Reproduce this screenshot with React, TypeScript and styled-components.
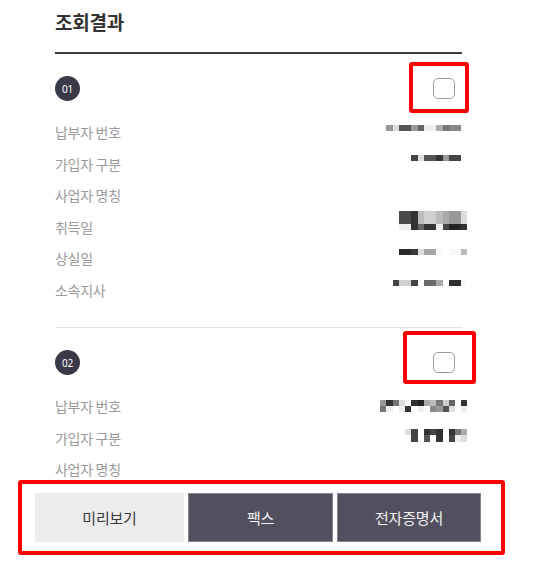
import React from "react";
import styled, { createGlobalStyle } from "styled-components";

const Global = createGlobalStyle`
  html, body { margin: 0; padding: 0; background: #fff; overflow: hidden; }
  body { font-family: "Noto Sans CJK KR", "Noto Sans", sans-serif; }
`;

const Page = styled.div`
  width: 407px;
  margin-left: 55px;
  padding-bottom: 90px;
`;

const Header = styled.div`
  height: 54px;
  padding-top: 8px;
  box-sizing: border-box;
  border-bottom: 2px solid #3a3a3a;
`;

const Title = styled.h2`
  margin: 0;
  font-size: 19px;
  line-height: 27px;
  font-weight: 700;
  color: #333;
  letter-spacing: -0.2px;
`;

const Item = styled.section`
  padding: 22px 0 21.5px;
  border-bottom: 1px solid #e4e4e4;
`;

const ItemHead = styled.div`
  display: flex;
  align-items: center;
  justify-content: space-between;
  padding-right: 7px;
  height: 25px;
  margin-bottom: 15.5px;
`;

const Badge = styled.span`
  width: 25px;
  height: 25px;
  border-radius: 50%;
  background: #3a3948;
  color: #fff;
  font-family: "Noto Sans", sans-serif;
  font-size: 10px;
  display: flex;
  align-items: center;
  justify-content: center;
  letter-spacing: -0.3px;
`;

const CheckWrap = styled.div`
  position: relative;
  width: 22px;
  height: 21px;
`;

const Check = styled.span`
  display: block;
  width: 22px;
  height: 21px;
  box-sizing: border-box;
  border: 1.5px solid #9c9c9c;
  border-radius: 5px;
  background: #fff;
`;

const Mark = styled.div<{ $l: number; $t: number; $w: number; $h: number }>`
  position: absolute;
  left: ${(p) => p.$l}px;
  top: ${(p) => p.$t}px;
  width: ${(p) => p.$w}px;
  height: ${(p) => p.$h}px;
  box-sizing: border-box;
  border: 4px solid #ff0000;
  border-radius: 3px;
  pointer-events: none;
`;

const Row = styled.div`
  display: flex;
  align-items: center;
  justify-content: space-between;
  height: 31.5px;
`;

const Label = styled.span`
  font-size: 14px;
  color: #9a9a9a;
  letter-spacing: -0.3px;
`;

const ValueSvg = styled.svg`
  display: block;
  margin-right: -5px;
  flex: none;
`;

type Band = { y: number; h: number; start: number; cells: string[] };

const CW = 6.25;

function Mosaic({ bands }: { bands: Band[] }) {
  return (
    <ValueSvg width={87.5} height={31.5} viewBox="0 0 87.5 31.5" shapeRendering="crispEdges">
      {bands.map((b, bi) =>
        b.cells.map((c, i) => (
          <rect key={`${bi}-${i}`} x={(b.start + i) * CW} y={b.y} width={CW + 0.02} height={b.h} fill={c} />
        ))
      )}
    </ValueSvg>
  );
}

type Field = { label: string; bands: Band[] };

const item1: Field[] = [
  {
    label: "납부자 번호",
    bands: [{ y: 7.5, h: 6, start: 1, cells: ["#999", "#ddd", "#555", "#555", "#999", "#666", "#eee", "#eee", "#aaa", "#777", "#888", "#888"] }],
  },
  {
    label: "가입자 구분",
    bands: [{ y: 7, h: 5.8, start: 5, cells: ["#444", "#ddd", "#555", "#555", "#333", "#999", "#444", "#444"] }],
  },
  { label: "사업자 명칭", bands: [] },
  {
    label: "취득일",
    bands: [
      { y: 0, h: 13, start: 3, cells: ["#4a4a4a", "#4a4a4a", "#333", "#bbb", "#d0d0d0", "#d0d0d0", "#bbb", "#aaa", "#999", "#999", "#ddd"] },
      { y: 13, h: 6, start: 3, cells: ["#eee", "#eee", "#333", "#666", "#333", "#333", "#eee", "#444", "#222", "#222", "#333"] },
    ],
  },
  {
    label: "상실일",
    bands: [{ y: 6, h: 6, start: 3, cells: ["#2a2a2a", "#2a2a2a", "#3a3a3a", "#ddd", "#a5a5a5", "#a5a5a5", "#f8f8f8", "#fff", "#f8f8f8", "#f8f8f8", "#bbb"] }],
  },
  {
    label: "소속지사",
    bands: [{ y: 6, h: 6, start: 2, cells: ["#444", "#d0d0d0", "#d0d0d0", "#444", "#fff", "#6a6a6a", "#6a6a6a", "#aaa", "#fff", "#2e2e2e", "#2e2e2e", "#f8f8f8"] }],
  },
];

const item2: Field[] = [
  {
    label: "납부자 번호",
    bands: [
      { y: 8.5, h: 6, start: 0, cells: ["#999", "#333", "#777", "#ddd", "#fff", "#333", "#222", "#aaa", "#bbb", "#777", "#ccc", "#666", "#fff", "#333"] },
      { y: 14.5, h: 6, start: 0, cells: ["#777", "#eee", "#fff", "#eee", "#333", "#fff", "#eee", "#fff", "#888", "#999", "#555", "#ddd", "#fff", "#eee"] },
    ],
  },
  {
    label: "가입자 구분",
    bands: [
      { y: 7, h: 6, start: 4, cells: ["#ddd", "#444", "#fff", "#333", "#444", "#333", "#fff", "#333", "#777", "#aaa"] },
      { y: 13, h: 7, start: 4, cells: ["#fff", "#444", "#fff", "#555", "#fff", "#333", "#fff", "#444", "#eee", "#ddd"] },
    ],
  },
  { label: "사업자 명칭", bands: [] },
];

const BottomBar = styled.div`
  position: fixed;
  left: 0;
  right: 0;
  bottom: 0;
  height: 84px;
  background: #fff;
  box-sizing: border-box;
  padding: 14.5px 0 0 35px;
`;

const Buttons = styled.div`
  display: grid;
  grid-template-columns: 149px 145px 144px;
  gap: 4px;
  height: 49.5px;
`;

const Btn = styled.button<{ $dark?: boolean }>`
  margin: 0;
  padding: 0;
  font-family: "Noto Sans CJK KR", sans-serif;
  font-size: 15px;
  letter-spacing: -0.2px;
  border: 1px solid ${(p) => (p.$dark ? "#86858f" : "#ececec")};
  background: ${(p) => (p.$dark ? "#52505e" : "#ececec")};
  color: ${(p) => (p.$dark ? "#f2f2f2" : "#3a3a3a")};
  cursor: pointer;
`;

const BarMark = styled.div`
  position: absolute;
  left: 18px;
  top: 2px;
  width: 487px;
  height: 75px;
  box-sizing: border-box;
  border: 4px solid #ff0000;
  border-radius: 3px;
  pointer-events: none;
`;

function Block({ no, fields, mark }: { no: string; fields: Field[]; mark: { l: number; t: number; w: number; h: number } }) {
  return (
    <Item>
      <ItemHead>
        <Badge>{no}</Badge>
        <CheckWrap>
          <Check />
          <Mark $l={mark.l} $t={mark.t} $w={mark.w} $h={mark.h} />
        </CheckWrap>
      </ItemHead>
      {fields.map((f) => (
        <Row key={f.label}>
          <Label>{f.label}</Label>
          <Mosaic bands={f.bands} />
        </Row>
      ))}
    </Item>
  );
}

export default function App() {
  return (
    <>
      <Global />
      <Page>
        <Header>
          <Title>조회결과</Title>
        </Header>
        <Block no="01" fields={item1} mark={{ l: -24, t: -16, w: 60, h: 51 }} />
        <Block no="02" fields={item2} mark={{ l: -30, t: -21, w: 73, h: 53 }} />
      </Page>
      <BottomBar>
        <Buttons>
          <Btn>미리보기</Btn>
          <Btn $dark>팩스</Btn>
          <Btn $dark>전자증명서</Btn>
        </Buttons>
        <BarMark />
      </BottomBar>
    </>
  );
}
